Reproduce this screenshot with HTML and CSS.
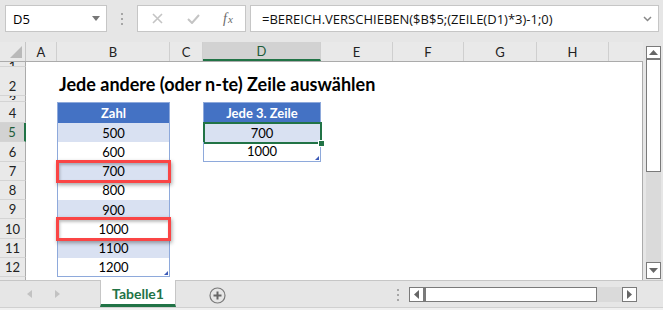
FILE: index.html
```html
<!DOCTYPE html>
<html lang="de">
<head>
    <meta charset="UTF-8">
    <title>Tabelle1</title>
    <link rel="stylesheet" href="styles.css">
</head>
<body>
    <div class="formula-bar">
        <div class="name-box">
            <span>D5</span>
            <svg width="8" height="5" viewBox="0 0 8 5"><polygon points="0,0 8,0 4,5" fill="#777"/></svg>
        </div>
        <div class="grip"><i></i><i></i><i></i></div>
        <div class="fx-box">
            <svg class="cancel" width="11" height="11" viewBox="0 0 11 11"><path d="M1 1 L10 10 M10 1 L1 10" stroke="#c4c4c4" stroke-width="1.6"/></svg>
            <svg class="enter" width="13" height="10" viewBox="0 0 13 10"><path d="M1 5 L5 9 L12 1" stroke="#c4c4c4" stroke-width="2" fill="none"/></svg>
            <span class="fx"><i>f</i><span>x</span></span>
        </div>
        <div class="formula">
            <span>=BEREICH.VERSCHIEBEN($B$5;(ZEILE(D1)*3)-1;0)</span>
            <svg width="9" height="6" viewBox="0 0 9 6"><path d="M1 1 L4.5 4.5 L8 1" stroke="#888" stroke-width="1.5" fill="none"/></svg>
        </div>
    </div>

    <div class="sheet">
        <div class="grid">
            <div class="row colhead">
                <div class="corner">
                    <svg width="26" height="20" viewBox="0 0 26 20"><polygon points="22,4 22,16 10,16" fill="#b9b9b9"/></svg>
                </div>
                <div class="ch a">A</div>
                <div class="ch b">B</div>
                <div class="ch cc">C</div>
                <div class="ch d active">D</div>
                <div class="ch e">E</div>
                <div class="ch f">F</div>
                <div class="ch g">G</div>
                <div class="ch h">H</div>
                <div class="ch rest"></div>
            </div>
            <div class="rows">
                <div class="row r1"><div class="rh"><span>1</span></div></div>
                <div class="row r2">
                    <div class="rh">2</div>
                    <div class="c a"></div>
                    <div class="c b title">Jede andere (oder n-te) Zeile auswählen</div>
                </div>
                <div class="row r3"><div class="rh"><span>3</span></div></div>
                <div class="row r4">
                    <div class="rh">4</div>
                    <div class="c a"></div>
                    <div class="c b t th">Zahl</div>
                    <div class="c cc"></div>
                    <div class="c d t th">Jede 3. Zeile</div>
                </div>
                <div class="row">
                    <div class="rh active">5</div>
                    <div class="c a"></div>
                    <div class="c b t band">500</div>
                    <div class="c cc"></div>
                    <div class="c d t band selected">700</div>
                </div>
                <div class="row">
                    <div class="rh">6</div>
                    <div class="c a"></div>
                    <div class="c b t">600</div>
                    <div class="c cc"></div>
                    <div class="c d t last">1000</div>
                </div>
                <div class="row">
                    <div class="rh">7</div>
                    <div class="c a"></div>
                    <div class="c b t band marked">700</div>
                </div>
                <div class="row">
                    <div class="rh">8</div>
                    <div class="c a"></div>
                    <div class="c b t">800</div>
                </div>
                <div class="row">
                    <div class="rh">9</div>
                    <div class="c a"></div>
                    <div class="c b t band">900</div>
                </div>
                <div class="row">
                    <div class="rh">10</div>
                    <div class="c a"></div>
                    <div class="c b t marked">1000</div>
                </div>
                <div class="row">
                    <div class="rh">11</div>
                    <div class="c a"></div>
                    <div class="c b t band">1100</div>
                </div>
                <div class="row">
                    <div class="rh">12</div>
                    <div class="c a"></div>
                    <div class="c b t last">1200</div>
                </div>
                <div class="row r13"><div class="rh"></div></div>
            </div>
        </div>

        <div class="vscroll">
            <div class="sbtn up"><svg width="9" height="5" viewBox="0 0 9 5"><polygon points="0,5 9,5 4.5,0" fill="#666"/></svg></div>
            <div class="vthumb"></div>
            <div class="vtrack"></div>
            <div class="sbtn down"><svg width="9" height="5" viewBox="0 0 9 5"><polygon points="0,0 9,0 4.5,5" fill="#666"/></svg></div>
        </div>
    </div>

    <div class="tabs">
        <div class="tab-nav">
            <svg width="5" height="8" viewBox="0 0 5 8"><polygon points="5,0 5,8 0,4" fill="#c2c2c2"/></svg>
            <svg width="5" height="8" viewBox="0 0 5 8"><polygon points="0,0 0,8 5,4" fill="#c2c2c2"/></svg>
        </div>
        <div class="tab">Tabelle1</div>
        <div class="add-sheet">
            <svg width="17" height="17" viewBox="0 0 17 17"><circle cx="8.5" cy="8.5" r="7.5" fill="none" stroke="#7a7a7a" stroke-width="1.2"/><path d="M8.5 4.5 V12.5 M4.5 8.5 H12.5" stroke="#666" stroke-width="2"/></svg>
        </div>
        <div class="grip tab-grip"><i></i><i></i><i></i></div>
        <div class="hscroll">
            <div class="sbtn left"><svg width="5" height="9" viewBox="0 0 5 9"><polygon points="5,0 5,9 0,4.5" fill="#666"/></svg></div>
            <div class="hthumb"></div>
            <div class="htrack"></div>
            <div class="sbtn right"><svg width="5" height="9" viewBox="0 0 5 9"><polygon points="0,0 0,9 5,4.5" fill="#666"/></svg></div>
        </div>
    </div>
    <div class="status"></div>
</body>
</html>
```

FILE: styles.css
```css
body {
    margin: 0;
    width: 663px;
    height: 310px;
    overflow: hidden;
    background-color: #e6e6e6;
    font-family: Lato, "Liberation Sans", sans-serif;
    color: #000;
}

/* formula bar */
.formula-bar {
    display: flex;
    height: 42px;
    padding: 5px 0 0 5px;
    box-sizing: border-box;
}
.name-box, .fx-box, .formula {
    height: 27px;
    box-sizing: border-box;
    background: white;
    border: 1px solid #c6c6c6;
    display: flex;
    align-items: center;
}
.name-box {
    width: 102px;
    justify-content: space-between;
    padding: 0 6px 0 7px;
    font-family: "Open Sans", sans-serif;
    font-size: 13px;
}
.grip {
    width: 30px;
    display: flex;
    flex-direction: column;
    align-items: center;
    gap: 3px;
    padding-top: 8px;
}
.grip i {
    display: block;
    width: 2px;
    height: 2px;
    background: #a6a6a6;
}
.fx-box {
    width: 109px;
}
.fx-box .cancel { margin-left: 14px; }
.fx-box .enter { margin-left: 24px; }
.fx {
    margin-left: 23px;
    font-family: "Liberation Serif", serif;
    font-style: italic;
    font-size: 14px;
    color: #6a6a6a;
}
.fx span { font-size: 11px; margin-left: 1px; }
.formula {
    width: 409px;
    margin-left: 4px;
    justify-content: space-between;
    padding: 0 6px 0 11px;
    font-family: "Open Sans", sans-serif;
    font-size: 13px;
    color: #111;
}

/* sheet */
.sheet {
    display: flex;
    height: 238px;
}
.grid {
    width: 643px;
}
.row {
    display: flex;
    height: 19.25px;
}
.colhead {
    height: 20px;
    background: #e9e9e9;
    box-sizing: border-box;
    border-bottom: 1px solid #ababab;
    font-size: 13px;
    color: #222;
}
.corner {
    width: 26px;
    height: 19px;
    box-sizing: border-box;
    border-right: 1px solid #c6c6c6;
}
.corner svg { display: block; }
.ch {
    box-sizing: border-box;
    border-right: 1px solid #cfcfcf;
    display: flex;
    align-items: center;
    justify-content: center;
}
.ch.active {
    background: #d2d2d2;
    border-bottom: 2px solid #217346;
    color: #1d5c39;
}
.ch.rest {
    flex: 1;
    border-right: none;
}
.a { width: 31px; }
.b { width: 113px; }
.cc { width: 33px; }
.d { width: 118px; }
.e { width: 72px; }
.f { width: 71px; }
.g { width: 73px; }
.h { width: 72px; }

.rows {
    width: 642px;
    height: 218px;
    background: white;
    border-right: 1px solid #ababab;
    overflow: hidden;
}
.r1 { height: 5px; }
.r2 { height: 29px; }
.r3 { height: 6px; }
.r4 { height: 21px; }
.r13 { height: 6px; }
.rh {
    width: 26px;
    flex: none;
    box-sizing: border-box;
    background: #e9e9e9;
    border-right: 1px solid #ababab;
    border-bottom: 1px solid #d4d4d4;
    display: flex;
    align-items: flex-end;
    justify-content: center;
    padding-bottom: 1px;
    font-size: 13px;
    line-height: 15px;
    color: #222;
    overflow: hidden;
}
.r1 .rh, .r3 .rh {
    align-items: flex-start;
    padding: 0;
}
.r1 .rh span, .r3 .rh span {
    display: block;
    height: 4px;
    line-height: 8px;
    overflow: hidden;
}
.rh.active {
    background: #d2d2d2;
    border-right: 2px solid #217346;
    color: #1d5c39;
}

.c {
    flex: none;
    box-sizing: border-box;
    display: flex;
    align-items: center;
    justify-content: center;
    font-size: 13px;
    position: relative;
}
.title {
    justify-content: flex-start;
    white-space: nowrap;
    padding: 4px 0 0 2px;
    font-size: 18px;
    font-weight: bold;
}

/* excel table */
.t {
    border-left: 1px solid #8ea9db;
    border-right: 1px solid #8ea9db;
}
.th {
    background-color: #4472c4;
    border-top: 1px solid #8ea9db;
    color: white;
    font-weight: bold;
}
.band {
    background-color: #d9e1f2;
}
.last {
    border-bottom: 1px solid #8ea9db;
}
.last::after {
    content: "";
    position: absolute;
    right: 1px;
    bottom: 1px;
    border-style: solid;
    border-width: 0 0 4px 4px;
    border-color: transparent transparent #3d5bb8 transparent;
}

/* active cell */
.selected::after {
    content: "";
    position: absolute;
    top: -1px;
    left: -1px;
    right: -2px;
    bottom: -2px;
    border: 2px solid #217346;
}
.selected::before {
    content: "";
    position: absolute;
    right: -5px;
    bottom: -5px;
    width: 5px;
    height: 5px;
    background: #217346;
    border: 1px solid white;
    z-index: 2;
}

/* red highlight boxes */
.marked::after {
    content: "";
    position: absolute;
    top: -2px;
    left: -2px;
    right: -2px;
    bottom: -2px;
    border: 3px solid #fa4545;
    box-shadow: 1px 2px 4px rgba(0, 0, 0, 0.35), inset 1px 2px 3px rgba(0, 0, 0, 0.25);
    z-index: 1;
}

/* scrollbars */
.vscroll {
    width: 15px;
    margin-left: 3px;
    padding-top: 4px;
    display: flex;
    flex-direction: column;
}
.sbtn {
    box-sizing: border-box;
    background: white;
    border: 1px solid #7a7a7a;
    display: flex;
    align-items: center;
    justify-content: center;
}
.sbtn svg { display: block; }
.up {
    height: 14px;
    border-bottom: 2px solid #7a7a7a;
}
.vthumb {
    height: 112px;
    box-sizing: border-box;
    background: white;
    border: 1px solid #7a7a7a;
    border-top: none;
}
.vtrack {
    height: 90px;
    background: #dadada;
}
.down {
    height: 17px;
}

/* sheet tabs */
.tabs {
    display: flex;
    height: 27px;
    box-sizing: border-box;
    border-top: 1px solid #c6c6c6;
}
.tab-nav {
    width: 100px;
    display: flex;
    align-items: center;
    gap: 23px;
    padding-left: 27px;
    box-sizing: border-box;
}
.tab {
    width: 76px;
    margin-top: -1px;
    box-sizing: border-box;
    background: white;
    border-left: 1px solid #c6c6c6;
    border-right: 1px solid #c6c6c6;
    border-bottom: 3px solid #217346;
    display: flex;
    align-items: center;
    justify-content: center;
    padding-top: 2px;
    font-size: 14px;
    font-weight: bold;
    color: #217346;
}
.add-sheet {
    margin-left: 33px;
    padding-top: 6px;
}
.add-sheet svg { display: block; }
.tab-grip {
    margin-left: 166px;
    padding-top: 8px;
    width: 12px;
}
.hscroll {
    margin-left: 5px;
    margin-top: 6px;
    height: 15px;
    display: flex;
}
.left, .right {
    width: 15px;
}
.hthumb {
    width: 173px;
    box-sizing: border-box;
    background: white;
    border: 1px solid #7a7a7a;
    border-left: 2px solid #7a7a7a;
}
.htrack {
    width: 25px;
    background: #dadada;
}
.status {
    height: 3px;
    border-top: 1px solid #d0d0d0;
    background: #f0f0f0;
}
```
